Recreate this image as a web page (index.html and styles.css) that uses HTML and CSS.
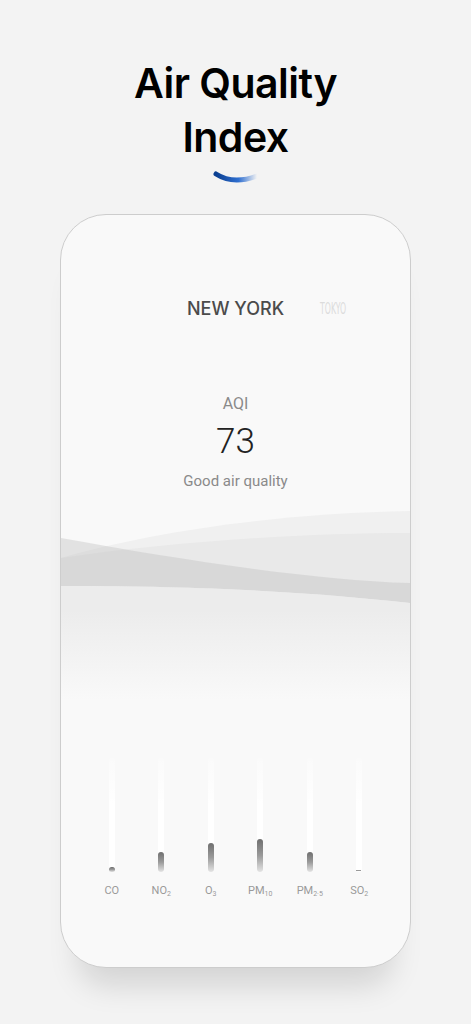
FILE: index.html
```html
<!DOCTYPE html>
<html>
<head>
    <title>Air Quality Index</title>
    <link rel="stylesheet" href="styles.css">
</head>
<body>
    <div class="hero">
        <h1>Air Quality<br>Index</h1>
        <svg class="swoosh" width="46" height="16" viewBox="0 0 46 16">
            <defs>
                <linearGradient id="sw" x1="0" y1="0" x2="1" y2="0">
                    <stop offset="0" stop-color="#0b3f91"/>
                    <stop offset="0.55" stop-color="#2f6fd0"/>
                    <stop offset="1" stop-color="#2f6fd0" stop-opacity="0"/>
                </linearGradient>
            </defs>
            <path d="M3 4 Q 20 15 44 6" fill="none" stroke="url(#sw)" stroke-width="5" stroke-linecap="round"/>
        </svg>
    </div>

    <div class="phone">
        <div class="cities">
            <span></span>
            <span class="city">NEW YORK</span>
            <span class="city-next">TOKYO</span>
        </div>

        <div class="aqi-label">AQI</div>
        <div class="aqi-value">73</div>
        <div class="aqi-text">Good air quality</div>

        <svg class="waves" viewBox="0 0 351 100" preserveAspectRatio="none">
            <path d="M0 48 C 90 22, 220 3, 351 1 L351 100 L0 100 Z" fill="#f0f0f0"/>
            <path d="M0 48 C 110 32, 240 23, 351 23 L351 100 L0 100 Z" fill="#e9e9e9"/>
            <path d="M0 28 C 110 48, 250 70, 351 73 L351 93 C 250 82, 150 76, 0 76 Z" fill="#bcbcbc" fill-opacity="0.38"/>
            <path d="M0 76 C 150 76, 250 82, 351 93 L351 100 L0 100 Z" fill="#ececec"/>
        </svg>
        <div class="fade"></div>

        <div class="gauges">
            <div class="gauge">
                <div class="track"><div class="fill" style="height: 5px"></div></div>
                <div class="name">CO</div>
            </div>
            <div class="gauge">
                <div class="track"><div class="fill" style="height: 20px"></div></div>
                <div class="name">NO<sub>2</sub></div>
            </div>
            <div class="gauge">
                <div class="track"><div class="fill" style="height: 29px"></div></div>
                <div class="name">O<sub>3</sub></div>
            </div>
            <div class="gauge">
                <div class="track"><div class="fill" style="height: 33px"></div></div>
                <div class="name">PM<sub>10</sub></div>
            </div>
            <div class="gauge">
                <div class="track"><div class="fill" style="height: 20px"></div></div>
                <div class="name">PM<sub>2·5</sub></div>
            </div>
            <div class="gauge">
                <div class="track"><div class="fill flat"></div></div>
                <div class="name">SO<sub>2</sub></div>
            </div>
        </div>
    </div>
</body>
</html>
```

FILE: styles.css
```css
html {
    background-color: #f3f3f3;
}
body {
    margin: 0;
    min-height: 1024px;
    background-color: #f3f3f3;
    font-family: Roboto, "Noto Sans", sans-serif;
}
.hero {
    padding-top: 56px;
    text-align: center;
}
h1 {
    margin: 0;
    font-family: Inter, sans-serif;
    font-size: 41px;
    line-height: 54px;
    font-weight: 600;
    letter-spacing: -0.5px;
    color: #000;
}
.swoosh {
    display: block;
    margin: 6px auto 0;
}
.phone {
    width: 349px;
    height: 752px;
    margin: 28px auto 0;
    border: 1.5px solid #cdcdcd;
    border-radius: 46px;
    background-color: #f9f9f9;
    box-shadow: 0 36px 30px -18px rgba(0, 0, 0, 0.13);
    overflow: hidden;
    display: flex;
    flex-direction: column;
    align-items: center;
}
.cities {
    width: 100%;
    margin-top: 83px;
    display: grid;
    grid-template-columns: 1fr auto 1fr;
    align-items: center;
}
.city {
    font-family: Inter, sans-serif;
    font-size: 18px;
    line-height: 22px;
    font-weight: 500;
    color: #4b4b4b;
}
.city-next {
    justify-self: start;
    margin-left: 36px;
    font-family: "DejaVu Sans", sans-serif;
    font-size: 15px;
    color: #dcdcdc;
    transform: scaleX(0.52);
    transform-origin: left center;
}
.aqi-label {
    margin-top: 74px;
    font-size: 16px;
    line-height: 20px;
    color: #8a8a8a;
}
.aqi-value {
    margin-top: 8px;
    font-size: 35px;
    line-height: 40px;
    font-weight: 300;
    color: #222;
}
.aqi-text {
    margin-top: 9px;
    font-size: 15px;
    line-height: 20px;
    color: #8a8a8a;
}
.waves {
    display: block;
    width: 100%;
    height: 100px;
    margin-top: 19px;
}
.fade {
    width: 100%;
    height: 90px;
    background: linear-gradient(#ececec, #f9f9f9);
}
.gauges {
    margin-top: 58px;
    display: grid;
    grid-template-columns: repeat(6, 49.5px);
}
.gauge {
    display: flex;
    flex-direction: column;
    align-items: center;
}
.track {
    width: 6px;
    height: 114px;
    border-radius: 3px;
    background: linear-gradient(rgba(255, 255, 255, 0.2), #fff 40%);
    display: flex;
    flex-direction: column;
    justify-content: flex-end;
}
.fill {
    width: 6px;
    border-radius: 3px;
    background: linear-gradient(#6f6f6f, #9a9a9a 50%, #e4e4e4);
}
.fill.flat {
    height: 1px;
    width: 5px;
    margin-bottom: 1px;
    border-radius: 0;
    background: #9a9a9a;
}
.name {
    margin-top: 12px;
    font-size: 11px;
    line-height: 14px;
    color: #9a9a9a;
}
.name sub {
    font-size: 7px;
    vertical-align: -2px;
    line-height: 0;
}
```
